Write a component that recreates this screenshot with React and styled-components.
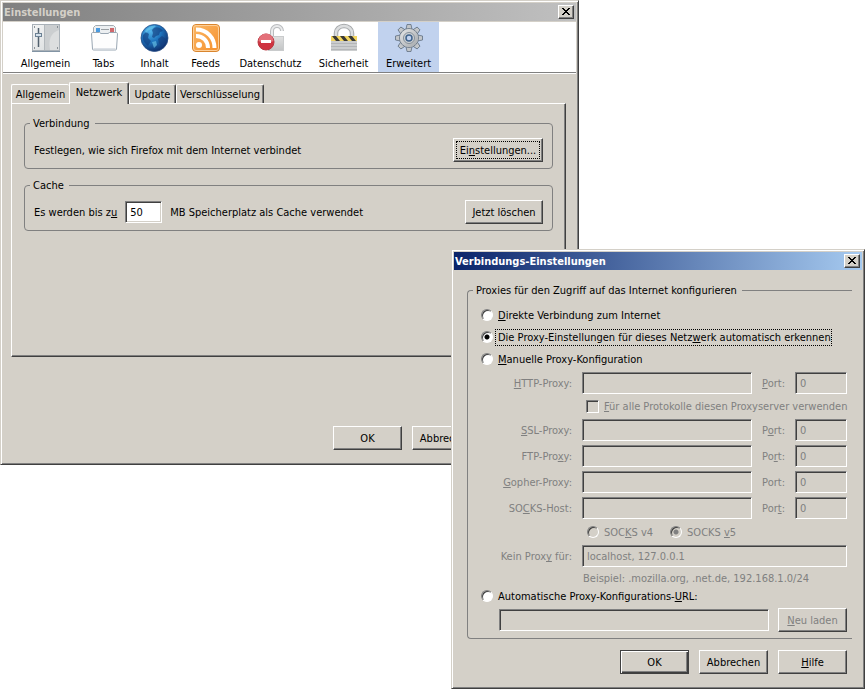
import { useState } from 'react';
import styled, { createGlobalStyle, css } from 'styled-components';

const face = '#d4d0c8';
const shadow = '#808080';
const dark = '#404040';

const GlobalStyle = createGlobalStyle`
  * {
    box-sizing: border-box;
  }
  body {
    margin: 0;
    background: #ffffff;
    color: #000000;
    font: 11px/13px 'DejaVu Sans Condensed', Tahoma, sans-serif;
  }
  button,
  input {
    font: inherit;
    color: inherit;
    margin: 0;
  }
  u {
    text-underline-offset: 1px;
    text-decoration-skip-ink: none;
  }
`;

const Desktop = styled.main`
  position: relative;
  min-height: 100vh;
  overflow: hidden;
`;

const Window = styled.section`
  position: absolute;
  background: ${face};
  border: 1px solid;
  border-color: ${face} ${dark} ${dark} ${face};
  box-shadow: inset 1px 1px #ffffff, inset -1px -1px ${shadow};
  padding: 2px;
`;

const SettingsWindow = styled(Window)`
  top: 0;
  left: 0;
  right: 286px;
`;

const ProxyWindow = styled(Window)`
  top: 249px;
  left: 451px;
  right: 0;
`;

const TitleBar = styled.header`
  display: flex;
  align-items: center;
  justify-content: space-between;
  height: 18px;
  padding: 0 2px 0 1px;
  color: ${({ $active }) => ($active ? '#ffffff' : face)};
  background: ${({ $active }) =>
    $active
      ? 'linear-gradient(90deg, #0a246a, #a6caf0)'
      : 'linear-gradient(90deg, #808080, #c0c0c0)'};
  & h1 {
    margin: 0;
    font-size: 11px;
    font-weight: bold;
    white-space: nowrap;
  }
`;

const raised = css`
  background: ${face};
  border: 1px solid;
  border-color: #ffffff ${dark} ${dark} #ffffff;
  box-shadow: inset -1px -1px ${shadow};
`;

const CloseButton = styled.button`
  ${raised}
  display: flex;
  align-items: center;
  justify-content: center;
  width: 16px;
  height: 14px;
  padding: 0 1px 1px 0;
  color: #000000;
`;

const Button = styled.button`
  ${raised}
  min-width: ${({ $width }) => $width || 69}px;
  height: 24px;
  padding: 0;
  white-space: nowrap;
  ${({ $default }) =>
    $default &&
    css`
      border-color: ${dark};
      box-shadow: inset 1px 1px #ffffff, inset -1px -1px ${dark},
        inset -2px -2px ${shadow};
    `}
  ${({ $focused }) =>
    $focused &&
    css`
      outline: 1px dotted #000000;
      outline-offset: -4px;
    `}
  &:disabled {
    color: ${shadow};
  }
`;

const Toolbar = styled.nav`
  display: flex;
  gap: 2px;
  margin-top: 1px;
  padding-left: 11px;
  background: #ffffff;
  border-bottom: 1px solid ${shadow};
  box-shadow: 0 1px #ffffff;
`;

const ToolButton = styled.button`
  display: flex;
  flex-direction: column;
  align-items: center;
  gap: 4px;
  flex: 0 0 ${({ $width }) => $width}px;
  height: 50px;
  padding: 1px 0 0;
  border: 0;
  background: ${({ $active }) => ($active ? '#c1d2ee' : 'transparent')};
  white-space: nowrap;
`;

const SettingsBody = styled.div`
  padding: 9px 10px 12px 8px;
`;

const TabList = styled.div`
  display: flex;
  align-items: flex-end;
  height: 21px;
`;

const Tab = styled.button`
  width: ${({ $width }) => $width}px;
  height: 19px;
  padding: 0;
  background: ${face};
  border: 1px solid;
  border-color: #ffffff ${dark} transparent #ffffff;
  border-bottom: 0;
  border-radius: 2px 2px 0 0;
  box-shadow: inset -1px 0 ${shadow};
  white-space: nowrap;
  ${({ $selected }) =>
    $selected &&
    css`
      position: relative;
      height: 22px;
      margin-bottom: -1px;
      padding-bottom: 3px;
    `}
  ${({ $covered }) =>
    $covered &&
    css`
      border-right: 0;
      box-shadow: none;
    `}
`;

const TabPanel = styled.div`
  display: flex;
  flex-direction: column;
  gap: 10px;
  min-height: 254px;
  padding: 13px 12px 12px;
  border: 1px solid;
  border-color: #ffffff ${dark} ${dark} #ffffff;
  box-shadow: inset -1px -1px ${shadow};
`;

const Group = styled.fieldset`
  min-width: 0;
  margin: 0;
  padding: 8px 9px 6px;
  border: 1px solid ${shadow};
  border-radius: 4px;
  & legend {
    margin-left: -4px;
    padding: 0 5px 0 3px;
  }
`;

const GroupRow = styled.div`
  display: flex;
  align-items: center;
  height: 24px;
  & > button {
    margin-left: auto;
  }
`;

const TextInput = styled.input`
  width: ${({ $width }) => ($width ? `${$width}px` : '100%')};
  min-width: 0;
  height: 22px;
  padding: 0 4px;
  background: #ffffff;
  border: 1px solid;
  border-color: ${shadow} #ffffff #ffffff ${shadow};
  border-radius: 0;
  box-shadow: inset 1px 1px ${dark}, inset -1px -1px ${face};
  outline: 0;
  &:disabled {
    background: ${face};
    color: ${shadow};
  }
`;

const CacheLabel = styled.label`
  margin-right: 8px;
`;

const CacheUnit = styled.span`
  margin-left: 8px;
`;

const Footer = styled.footer`
  display: flex;
  justify-content: flex-end;
  gap: 10px;
`;

const SettingsFooter = styled(Footer)`
  margin-top: 69px;
  padding-right: 85px;
`;

const ProxyBody = styled.div`
  padding: 14px 10px 12px 13px;
`;

const ProxyGroup = styled(Group)`
  padding: 7px 5px 6px 13px;
  border-right: 0;
  border-radius: 4px 0 0 4px;
  & legend {
    margin-left: -8px;
  }
`;

const ProxyFooter = styled(Footer)`
  margin-top: 11px;
  padding-right: 5px;
`;

const ChoiceRow = styled.div`
  display: flex;
  align-items: center;
  gap: 2px;
  height: 22px;
`;

const ChoiceLabel = styled.label`
  padding: 1px 0 1px 2px;
  border: 1px dotted ${({ $focused }) => ($focused ? '#000000' : 'transparent')};
  color: ${({ $disabled }) => ($disabled ? shadow : 'inherit')};
  white-space: nowrap;
`;

const Radio = styled.input`
  flex: none;
  appearance: none;
  width: 12px;
  height: 12px;
  border: 1px solid;
  border-color: ${shadow} #ffffff #ffffff ${shadow};
  border-radius: 50%;
  background: #ffffff;
  box-shadow: inset 1px 1px ${dark};
  &:checked {
    background: radial-gradient(circle, #000000 2px, #ffffff 3px);
  }
  &:disabled {
    background: ${face};
  }
  &:checked:disabled {
    background: radial-gradient(circle, ${shadow} 2px, ${face} 3px);
  }
`;

const Checkbox = styled.input`
  flex: none;
  appearance: none;
  width: 13px;
  height: 13px;
  border: 1px solid;
  border-color: ${shadow} #ffffff #ffffff ${shadow};
  background: ${face};
  box-shadow: inset 1px 1px ${dark};
`;

const ManualGrid = styled.div`
  display: grid;
  grid-template-columns: 73px 1fr 23px 52px;
  gap: 4px 10px;
  align-items: center;
  margin: 2px 0 0 18px;
  color: ${shadow};
`;

const FieldLabel = styled.label`
  justify-self: end;
  white-space: nowrap;
`;

const WideCell = styled.div`
  display: flex;
  align-items: center;
  grid-column: 2 / -1;
  gap: 16px;
  padding-left: ${({ $indent }) => $indent || 0}px;
  height: ${({ $height }) => $height}px;
  white-space: nowrap;
`;

const UrlRow = styled.div`
  display: flex;
  align-items: center;
  gap: 9px;
  margin: 1px 0 0 18px;
`;

const SlidersIcon = () => (
  <svg width="30" height="30" viewBox="0 0 30 30">
    <defs>
      <linearGradient id="plate" x2="1" y2="1">
        <stop offset="0" stopColor="#f4f5f5" />
        <stop offset="1" stopColor="#d6d9db" />
      </linearGradient>
    </defs>
    <rect x="1.5" y="1.5" width="27" height="26" fill="url(#plate)" stroke="#a9b1b8" />
    <path d="M14 2h14v25H14z" fill="#cbced0" />
    <path d="M28 7c-8 3-11 9-9 20h9z" fill="#dcdedf" />
    <path d="M1 28.5h28" stroke="#8294a4" />
    <path d="M13.5 2v25" stroke="#b3b8bc" />
    <path d="M7.5 5v19" stroke="#51606e" strokeWidth="1.5" />
    <rect x="4.5" y="10.5" width="6" height="3" fill="#d6e2ec" stroke="#6c8194" />
    <path d="M3 4h1M3 25h1M26 4h1M26 25h1" stroke="#6f7880" strokeWidth="1.5" />
  </svg>
);

const TabsIcon = () => (
  <svg width="30" height="30" viewBox="0 0 30 30">
    <path d="M4.500 11V4.500l2-2h18l2 2V11z" fill="#eceff1" stroke="#a4acb2" />
    <rect x="7" y="5" width="4" height="4" fill="#4a9be0" />
    <path d="M12 6.500h8" stroke="#9aa0a4" />
    <rect x="21" y="5" width="4" height="4" fill="#d0686c" />
    <path
      d="M2.500 11c0-1 .5-1.500 1.500-1.500h6.500l1.500 1h7l1.500-1H27c1 0 1.500.5 1.500 1.500l-1 15c0 .7-.5 1-1 1h-22c-.6 0-1-.3-1-1z"
      fill="#fdfdfd"
      stroke="#9aa7b3"
    />
    <path d="M4.500 26h22" stroke="#d3d9df" strokeWidth="1.500" />
  </svg>
);

const GlobeIcon = () => (
  <svg width="30" height="30" viewBox="0 0 30 30">
    <defs>
      <radialGradient id="ocean" cx="0.35" cy="0.25" r="0.8">
        <stop offset="0" stopColor="#52b4ea" />
        <stop offset="0.5" stopColor="#1d72bc" />
        <stop offset="1" stopColor="#0d2a66" />
      </radialGradient>
    </defs>
    <circle cx="14.5" cy="15" r="13.5" fill="url(#ocean)" stroke="#2a5088" strokeWidth="0.8" />
    <path
      d="M14 5c3-2 7 0 9 3l-3 1-1 3-3 1-2 2-2-1 1-4-1-3zM3 12l3-3 3 2-1 4 3 3-3 5C4 20 2 16 3 12zM18 16l4-3 4 3c0 4-2 6-4 8l-3-4z"
      fill="#143f80"
      opacity="0.65"
    />
    <path d="M5 8c3-4 7-6 11-5l-4 3-3 1-3 3zM12 19l4-1 1 4-3 3z" fill="#70cbec" opacity="0.6" />
  </svg>
);

const FeedIcon = () => (
  <svg width="30" height="30" viewBox="0 0 30 30">
    <defs>
      <linearGradient id="feed" x2="1" y2="1">
        <stop offset="0" stopColor="#fbb866" />
        <stop offset="1" stopColor="#f58f2c" />
      </linearGradient>
    </defs>
    <rect x="1.5" y="1.5" width="27" height="27" rx="3.5" fill="url(#feed)" stroke="#d9852e" />
    <rect x="2.5" y="2.5" width="25" height="25" rx="2.5" fill="none" stroke="#fdd09a" />
    <circle cx="8" cy="22" r="3" fill="#ffffff" />
    <path
      d="M5 13c7 0 12 5 12 12M5 6.500c11 0 18.500 8 18.500 18.500"
      fill="none"
      stroke="#ffffff"
      strokeWidth="4"
    />
  </svg>
);

const PrivacyIcon = () => (
  <svg width="30" height="30" viewBox="0 0 30 30">
    <defs>
      <linearGradient id="openLock" x2="0" y2="1">
        <stop offset="0" stopColor="#e0e0e0" />
        <stop offset="1" stopColor="#c2c4c5" />
      </linearGradient>
    </defs>
    <path d="M16 14V8a5 5 0 0 1 10 0" fill="none" stroke="#b9bbbd" strokeWidth="4" />
    <path d="M16 14V8a5 5 0 0 1 10 0" fill="none" stroke="#eaebec" strokeWidth="2" />
    <rect x="12.5" y="13.5" width="15" height="14" fill="url(#openLock)" stroke="#c9cbcc" />
    <circle cx="10" cy="19" r="8" fill="#cf3340" stroke="#b93640" />
    <path d="M2.500 18a7.500 7.500 0 0 1 15 0c-4 2-11 2-15 0z" fill="#e88087" opacity="0.8" />
    <rect x="5" y="17" width="10" height="3" fill="#ffffff" />
  </svg>
);

const LockIcon = () => (
  <svg width="30" height="30" viewBox="0 0 30 30">
    <path d="M7 14v-4a8 7 0 0 1 16 0v4" fill="none" stroke="#a6a9ab" strokeWidth="4.500" />
    <path d="M7 14v-4a8 7 0 0 1 16 0v4" fill="none" stroke="#dcdedf" strokeWidth="2.500" />
    <rect x="2" y="13" width="26" height="15" fill="#cbcdce" />
    <path d="M2 20.500h26M2 23.500h26M2 26.500h26" stroke="#b4b6b8" />
    <rect x="2" y="13" width="26" height="5" fill="#f2d560" />
    <path d="M3 13h4l4 5H7zM11 13h4l4 5h-4zM19 13h4l4 5h-4z" fill="#3a3934" />
  </svg>
);

const GearIcon = () => (
  <svg width="30" height="30" viewBox="0 0 30 30">
    <defs>
      <linearGradient id="steel" x2="1" y2="1">
        <stop offset="0" stopColor="#e6e7e8" />
        <stop offset="1" stopColor="#a3a7aa" />
      </linearGradient>
    </defs>
    <g fill="#c3c6c9" stroke="#5f6f80" strokeWidth="0.8">
      {[0, 45, 90, 135, 180, 225, 270, 315].map((angle) => (
        <path key={angle} d="M12 6.500l1-5h4l1 5z" transform={`rotate(${angle} 15 15)`} />
      ))}
      <circle cx="15" cy="15" r="9.5" />
    </g>
    <circle cx="15" cy="15" r="9" fill="url(#steel)" />
    <circle cx="15" cy="15" r="5.5" fill="#cfd2d4" stroke="#85909b" />
    <circle cx="15" cy="15" r="3" fill="#c1d2ee" stroke="#40638c" strokeWidth="1.5" />
  </svg>
);

const CloseGlyph = () => (
  <svg width="8" height="7" viewBox="0 0 8 7" shapeRendering="crispEdges">
    <path d="M0 0h2v1h1v1h2V1h1V0h2v1H7v1H6v1H5v1h1v1h1v1h1v1H6V6H5V5H3v1H2v1H0V6h1V5h1V4h1V3H2V2H1V1H0z" />
  </svg>
);

const tools = [
  { name: 'Allgemein', width: 63, Icon: SlidersIcon },
  { name: 'Tabs', width: 49, Icon: TabsIcon },
  { name: 'Inhalt', width: 49, Icon: GlobeIcon },
  { name: 'Feeds', width: 49, Icon: FeedIcon },
  { name: 'Datenschutz', width: 77, Icon: PrivacyIcon },
  { name: 'Sicherheit', width: 65, Icon: LockIcon },
  { name: 'Erweitert', width: 61, Icon: GearIcon },
];

const ProxyRow = ({ id, label, portLabel, disabled }) => (
  <>
    <FieldLabel htmlFor={id}>{label}</FieldLabel>
    <TextInput id={id} disabled={disabled} />
    <FieldLabel htmlFor={`${id}-port`}>{portLabel}</FieldLabel>
    <TextInput id={`${id}-port`} defaultValue="0" disabled={disabled} />
  </>
);

const Settings = () => (
  <SettingsWindow aria-label="Einstellungen">
    <TitleBar>
      <h1>Einstellungen</h1>
      <CloseButton aria-label="Schließen">
        <CloseGlyph />
      </CloseButton>
    </TitleBar>
    <Toolbar>
      {tools.map(({ name, width, Icon }) => (
        <ToolButton key={name} $width={width} $active={name === 'Erweitert'}>
          <Icon />
          {name}
        </ToolButton>
      ))}
    </Toolbar>
    <SettingsBody>
      <TabList role="tablist">
        <Tab role="tab" $width={58} $covered>
          Allgemein
        </Tab>
        <Tab role="tab" aria-selected="true" $width={60} $selected>
          Netzwerk
        </Tab>
        <Tab role="tab" $width={47}>
          Update
        </Tab>
        <Tab role="tab" $width={88}>
          Verschlüsselung
        </Tab>
      </TabList>
      <TabPanel role="tabpanel">
        <Group>
          <legend>Verbindung</legend>
          <GroupRow>
            Festlegen, wie sich Firefox mit dem Internet verbindet
            <Button $width={90} $focused>
              Ei<u>n</u>stellungen...
            </Button>
          </GroupRow>
        </Group>
        <Group>
          <legend>Cache</legend>
          <GroupRow>
            <CacheLabel htmlFor="cache">
              Es werden bis z<u>u</u>
            </CacheLabel>
            <TextInput id="cache" $width={37} defaultValue="50" />
            <CacheUnit>MB Speicherplatz als Cache verwendet</CacheUnit>
            <Button $width={78}>Jetzt löschen</Button>
          </GroupRow>
        </Group>
      </TabPanel>
      <SettingsFooter>
        <Button>OK</Button>
        <Button>Abbrechen</Button>
      </SettingsFooter>
    </SettingsBody>
  </SettingsWindow>
);

const ProxySettings = () => {
  const [mode, setMode] = useState('auto');
  const manual = mode === 'manual';

  const choice = (value, label) => (
    <ChoiceRow>
      <Radio
        type="radio"
        name="mode"
        id={value}
        checked={mode === value}
        onChange={() => setMode(value)}
      />
      <ChoiceLabel htmlFor={value} $focused={mode === value}>
        {label}
      </ChoiceLabel>
    </ChoiceRow>
  );

  return (
    <ProxyWindow aria-label="Verbindungs-Einstellungen">
      <TitleBar $active>
        <h1>Verbindungs-Einstellungen</h1>
        <CloseButton aria-label="Schließen">
          <CloseGlyph />
        </CloseButton>
      </TitleBar>
      <ProxyBody>
        <ProxyGroup>
          <legend>Proxies für den Zugriff auf das Internet konfigurieren</legend>
          {choice('direct', <><u>D</u>irekte Verbindung zum Internet</>)}
          {choice('auto', <>Die Proxy-Einstellungen für dieses Netz<u>w</u>erk automatisch erkennen</>)}
          {choice('manual', <><u>M</u>anuelle Proxy-Konfiguration</>)}
          <ManualGrid>
            <ProxyRow id="http" label={<><u>H</u>TTP-Proxy:</>} portLabel={<><u>P</u>ort:</>} disabled={!manual} />
            <WideCell $height={17} $indent={4}>
              <ChoiceRow>
                <Checkbox type="checkbox" id="share" disabled={!manual} />
                <ChoiceLabel htmlFor="share" $disabled={!manual}>
                  <u>F</u>ür alle Protokolle diesen Proxyserver verwenden
                </ChoiceLabel>
              </ChoiceRow>
            </WideCell>
            <ProxyRow id="ssl" label={<><u>S</u>SL-Proxy:</>} portLabel={<>P<u>o</u>rt:</>} disabled={!manual} />
            <ProxyRow id="ftp" label={<>FTP-Pro<u>x</u>y:</>} portLabel={<>Po<u>r</u>t:</>} disabled={!manual} />
            <ProxyRow id="gopher" label={<><u>G</u>opher-Proxy:</>} portLabel="Port:" disabled={!manual} />
            <ProxyRow id="socks" label={<>SO<u>C</u>KS-Host:</>} portLabel={<>Por<u>t</u>:</>} disabled={!manual} />
            <WideCell $height={18} $indent={5}>
              <ChoiceRow>
                <Radio type="radio" name="socks" id="v4" disabled={!manual} />
                <ChoiceLabel htmlFor="v4" $disabled={!manual}>
                  SOC<u>K</u>S v4
                </ChoiceLabel>
              </ChoiceRow>
              <ChoiceRow>
                <Radio type="radio" name="socks" id="v5" defaultChecked disabled={!manual} />
                <ChoiceLabel htmlFor="v5" $disabled={!manual}>
                  SOCKS <u>v</u>5
                </ChoiceLabel>
              </ChoiceRow>
            </WideCell>
            <FieldLabel htmlFor="bypass">
              Kein Prox<u>y</u> für:
            </FieldLabel>
            <WideCell $height={22}>
              <TextInput id="bypass" defaultValue="localhost, 127.0.0.1" disabled={!manual} />
            </WideCell>
            <WideCell $height={14} $indent={1}>
              Beispiel: .mozilla.org, .net.de, 192.168.1.0/24
            </WideCell>
          </ManualGrid>
          {choice('url', <>Automatische Proxy-Konfigurations-<u>U</u>RL:</>)}
          <UrlRow>
            <TextInput aria-labelledby="url" disabled={mode !== 'url'} />
            <Button disabled={mode !== 'url'}>
              <u>N</u>eu laden
            </Button>
          </UrlRow>
        </ProxyGroup>
        <ProxyFooter>
          <Button $default>OK</Button>
          <Button>Abbrechen</Button>
          <Button>
            <u>H</u>ilfe
          </Button>
        </ProxyFooter>
      </ProxyBody>
    </ProxyWindow>
  );
};

export default function App() {
  return (
    <>
      <GlobalStyle />
      <Desktop>
        <Settings />
        <ProxySettings />
      </Desktop>
    </>
  );
}
